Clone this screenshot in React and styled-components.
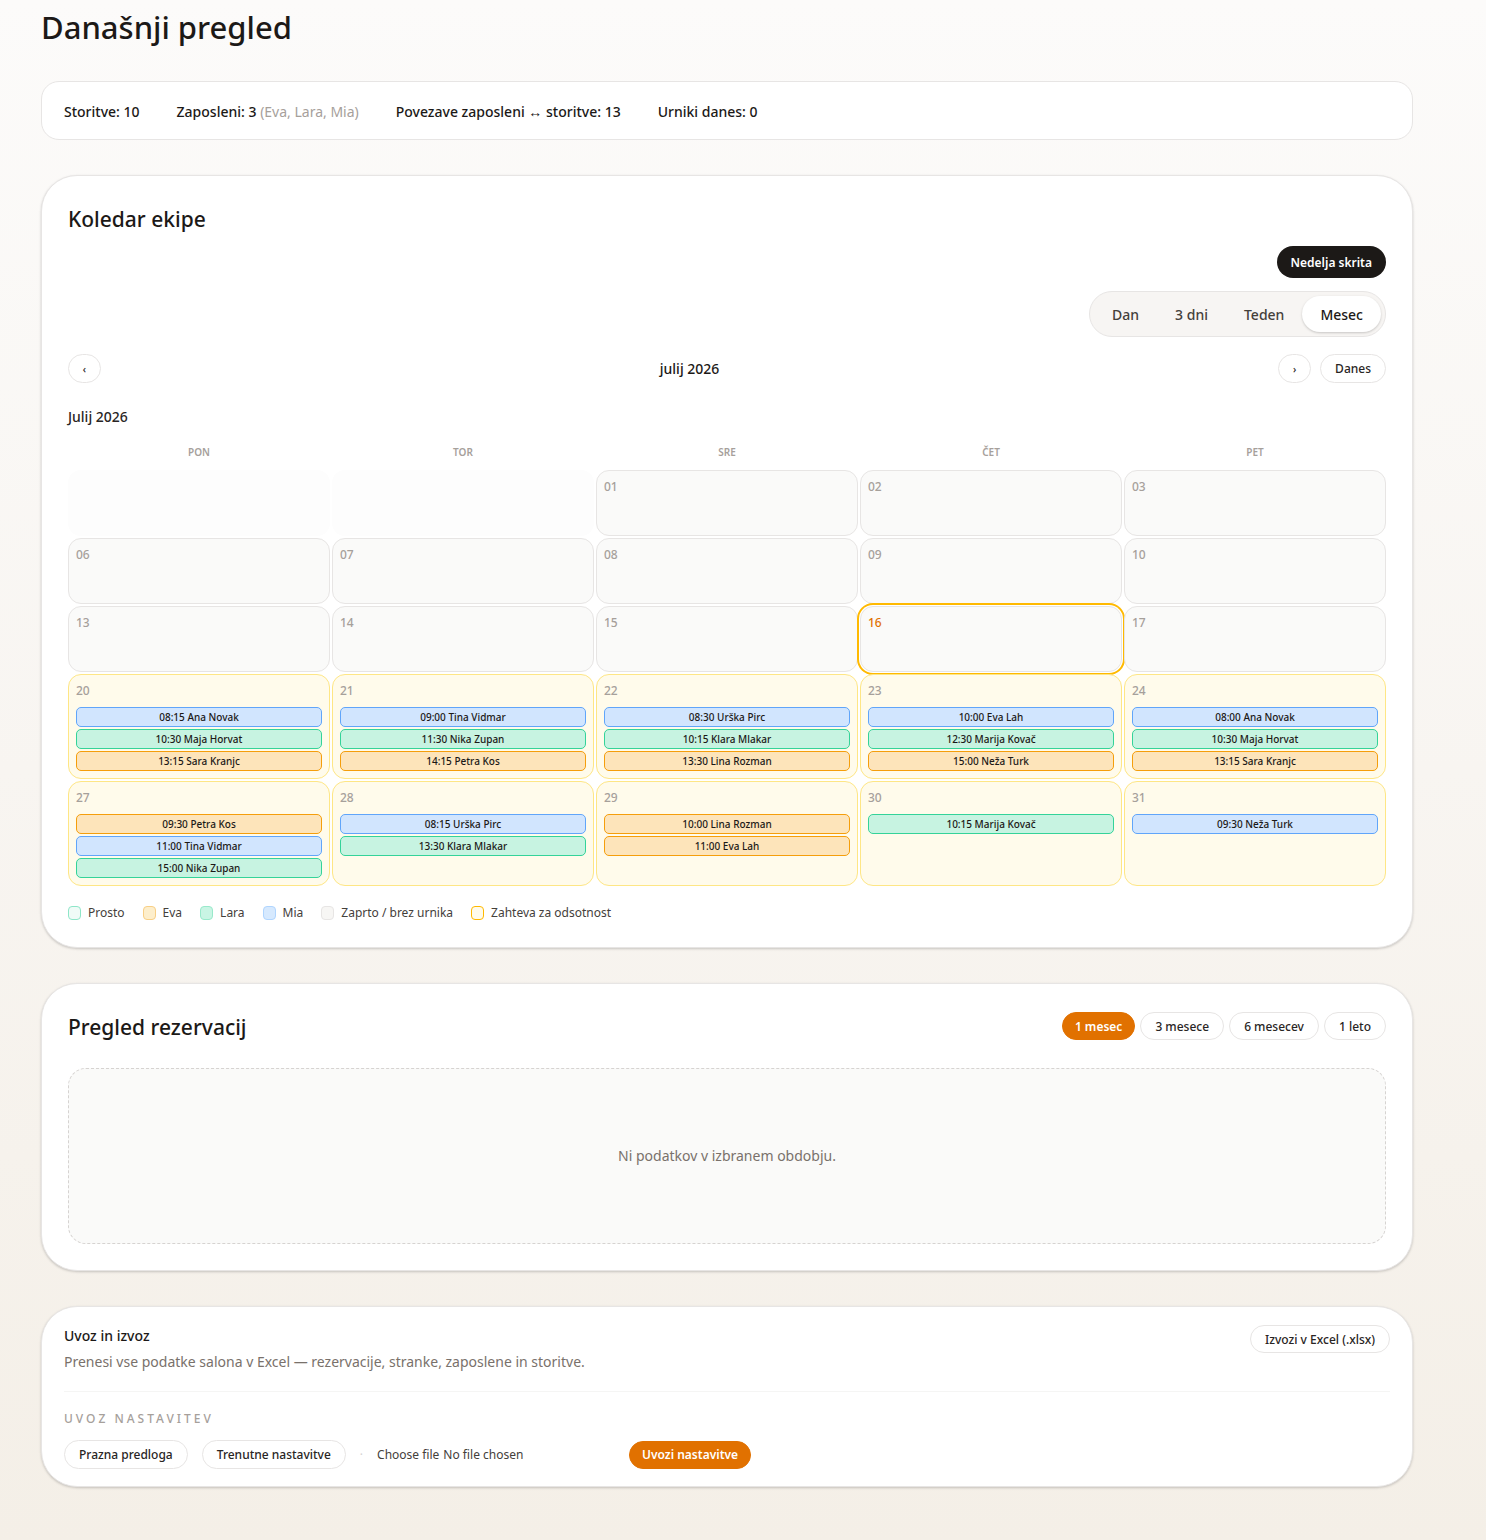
import React,{useState} from 'react';
import styled,{createGlobalStyle,css} from 'styled-components';

const GlobalStyle=createGlobalStyle`
    *{
        box-sizing:border-box;
    }
    html{
        min-height:100%;
        background:linear-gradient(to bottom,#fcfbfa 0%,#f8f5f1 50%,#f4efe7 100%);
    }
    body{
        margin:0;
        font-family:"Noto Sans","Open Sans",sans-serif;
        font-size:14px;
        line-height:20px;
        color:#1c1917;
    }
    h1,h2,h3,p,ul{
        margin:0;
        padding:0;
    }
    button{
        font-family:inherit;
        cursor:pointer;
    }
`;

const Page=styled.main`
    display:flex;
    flex-direction:column;
    gap:35px;
    padding:9px 73px 53px 41px;
`;

const Title=styled.h1`
    font-size:31px;
    line-height:37px;
    font-weight:500;
`;

const StatsBar=styled.section`
    display:flex;
    flex-wrap:wrap;
    gap:37px;
    padding:20px 22px 17px;
    background:#fff;
    border:1px solid #e7e5e4;
    border-radius:18px;
    font-weight:500;
`;

const Muted=styled.span`
    color:#a6a09b;
    font-weight:400;
`;

const Card=styled.section`
    display:flex;
    flex-direction:column;
    padding:${props=>props.$compact?"18px 22px 17px":"26px"};
    background:#fff;
    border:1px solid #e7e5e4;
    border-radius:36px;
    box-shadow:0 1px 3px rgba(0,0,0,0.12),0 1px 2px rgba(0,0,0,0.08);
`;

const CardTitle=styled.h2`
    font-size:21px;
    line-height:34px;
    font-weight:500;
`;

const ToolbarRow=styled.div`
    display:flex;
    justify-content:flex-end;
    margin-top:${props=>props.$space}px;
`;

const DarkButton=styled.button`
    height:32px;
    padding:0 14px;
    border:0;
    border-radius:16px;
    background:#1c1917;
    color:#fff;
    font-size:12px;
    font-weight:600;
`;

const Segmented=styled.div`
    display:flex;
    height:46px;
    padding:4px;
    border:1px solid #e7e5e4;
    border-radius:23px;
    background:#f7f5f3;
`;

const Segment=styled.button`
    height:36px;
    padding:0 18px;
    border:0;
    border-radius:18px;
    background:transparent;
    color:#44403b;
    font-size:14px;
    font-weight:500;
    ${props=>props.$active && css`
        background:#fff;
        color:#1c1917;
        box-shadow:0 1px 3px rgba(0,0,0,0.12),0 1px 2px rgba(0,0,0,0.08);
    `}
`;

const PillButton=styled.button`
    height:${props=>props.$tall?29:28}px;
    padding:0 14px;
    border:1px solid #e7e5e4;
    border-radius:15px;
    background:#fff;
    color:#292524;
    font-size:12px;
    font-weight:500;
    white-space:nowrap;
    ${props=>props.$active && css`
        border-color:#e17100;
        background:#e17100;
        color:#fff;
        font-weight:600;
        padding:0 12px;
    `}
`;

const ArrowButton=styled(PillButton)`
    width:33px;
    padding:0;
    font-size:10px;
`;

const MonthNav=styled.div`
    display:flex;
    align-items:center;
    justify-content:space-between;
    margin-top:17px;
`;

const NavGroup=styled.div`
    display:flex;
    gap:9px;
`;

const MonthLabel=styled.span`
    font-weight:500;
`;

const MonthHeading=styled.h3`
    margin-top:24px;
    font-size:14px;
    line-height:20px;
    font-weight:500;
    color:#292524;
`;

const WeekGrid=styled.div`
    display:grid;
    grid-template-columns:repeat(5,1fr);
    gap:2px;
`;

const WeekHeader=styled(WeekGrid)`
    margin:17px 0 10px;
`;

const DayName=styled.div`
    text-align:center;
    font-size:10px;
    line-height:16px;
    font-weight:600;
    color:#a6a09b;
`;

const DayCell=styled.div`
    display:flex;
    flex-direction:column;
    min-height:${props=>props.$open?105:66}px;
    padding:7px 7px 6px;
    border:1px solid ${props=>props.$open?"#fee685":"#e7e5e4"};
    border-radius:13px;
    background:${props=>props.$open?"#fffbeb":"#fafaf9"};
    ${props=>props.$today && css`
        box-shadow:0 0 0 1px #fff,0 0 0 3px #ffb900;
    `}
`;

const EmptyCell=styled.div`
    border-radius:13px;
    background:#fdfdfd;
`;

const DayNumber=styled.span`
    font-size:12px;
    line-height:18px;
    font-weight:500;
    color:${props=>props.$today?"#e17100":"#a6a09b"};
`;

const EventList=styled.ul`
    display:flex;
    flex-direction:column;
    gap:2px;
    margin-top:7px;
    list-style:none;
`;

const staff={
    eva:{
        background:"#fde4ba",
        border:"#f59e0b"
    },
    lara:{
        background:"#c7f3e1",
        border:"#34d399"
    },
    mia:{
        background:"#d1e5fe",
        border:"#60a5fa"
    }
};

const EventPill=styled.li`
    height:20px;
    border:1px solid ${props=>staff[props.$who].border};
    border-radius:5px;
    background:${props=>staff[props.$who].background};
    font-size:10px;
    line-height:19px;
    font-weight:500;
    text-align:center;
    white-space:nowrap;
    overflow:hidden;
`;

const Legend=styled.ul`
    display:flex;
    flex-wrap:wrap;
    gap:18px;
    margin-top:18px;
    list-style:none;
    font-size:12px;
    line-height:17px;
    color:#44403b;
`;

const LegendItem=styled.li`
    display:flex;
    align-items:center;
    gap:7px;
`;

const Swatch=styled.span`
    width:13px;
    height:14px;
    border:1px solid ${props=>props.$border};
    border-radius:4px;
    background:${props=>props.$fill};
`;

const CardHead=styled.div`
    display:flex;
    align-items:flex-start;
    justify-content:space-between;
`;

const PeriodGroup=styled.div`
    display:flex;
    gap:5px;
    padding-top:2px;
`;

const EmptyState=styled.div`
    display:flex;
    align-items:center;
    justify-content:center;
    height:176px;
    margin-top:24px;
    border:1px dashed #d6d3d1;
    border-radius:18px;
    background:#fafaf9;
    color:#79716b;
`;

const SmallTitle=styled.h2`
    font-size:14px;
    line-height:22px;
    font-weight:500;
`;

const Description=styled.p`
    margin-top:4px;
    line-height:22px;
    color:#79716b;
`;

const ImportArea=styled.div`
    margin-top:18px;
    padding-top:18px;
    border-top:1px solid #f5f5f4;
`;

const Overline=styled.h3`
    font-size:12px;
    line-height:18px;
    font-weight:500;
    letter-spacing:3px;
    text-transform:uppercase;
    color:#a6a09b;
`;

const ImportRow=styled.div`
    display:flex;
    flex-wrap:wrap;
    align-items:center;
    gap:14px;
    margin-top:12px;
    font-size:12px;
    color:#44403b;
`;

const Dot=styled.span`
    color:#d6d3d1;
`;

const FileLabel=styled.label`
    display:flex;
    gap:4px;
    width:238px;
    cursor:pointer;
`;

const HiddenFile=styled.input`
    position:absolute;
    width:1px;
    height:1px;
    opacity:0;
`;

const weekDays=["pon","tor","sre","čet","pet"];

const closedDays=["01","02","03","06","07","08","09","10","13","14","15","16","17"];

const openDays=[
    {day:"20",events:[["mia","08:15 Ana Novak"],["lara","10:30 Maja Horvat"],["eva","13:15 Sara Kranjc"]]},
    {day:"21",events:[["mia","09:00 Tina Vidmar"],["lara","11:30 Nika Zupan"],["eva","14:15 Petra Kos"]]},
    {day:"22",events:[["mia","08:30 Urška Pirc"],["lara","10:15 Klara Mlakar"],["eva","13:30 Lina Rozman"]]},
    {day:"23",events:[["mia","10:00 Eva Lah"],["lara","12:30 Marija Kovač"],["eva","15:00 Neža Turk"]]},
    {day:"24",events:[["mia","08:00 Ana Novak"],["lara","10:30 Maja Horvat"],["eva","13:15 Sara Kranjc"]]},
    {day:"27",events:[["eva","09:30 Petra Kos"],["mia","11:00 Tina Vidmar"],["lara","15:00 Nika Zupan"]]},
    {day:"28",events:[["mia","08:15 Urška Pirc"],["lara","13:30 Klara Mlakar"]]},
    {day:"29",events:[["eva","10:00 Lina Rozman"],["eva","11:00 Eva Lah"]]},
    {day:"30",events:[["lara","10:15 Marija Kovač"]]},
    {day:"31",events:[["mia","09:30 Neža Turk"]]}
];

const legend=[
    {label:"Prosto",fill:"#f0fbf7",border:"#8ee6c8"},
    {label:"Eva",fill:"#fdeecb",border:"#f8cf86"},
    {label:"Lara",fill:"#c9f5e4",border:"#99e9cb"},
    {label:"Mia",fill:"#d6e9fe",border:"#b0d5fe"},
    {label:"Zaprto / brez urnika",fill:"#f7f6f4",border:"#e7e5e4"},
    {label:"Zahteva za odsotnost",fill:"#fffbeb",border:"#ffb900"}
];

const views=["Dan","3 dni","Teden","Mesec"];
const periods=["1 mesec","3 mesece","6 mesecev","1 leto"];
const today="16";

function TeamCalendar(){

    const [view,set_view]=useState("Mesec");

    return(
        <Card>
            <CardTitle>Koledar ekipe</CardTitle>
            <ToolbarRow $space={10}>
                <DarkButton type="button">Nedelja skrita</DarkButton>
            </ToolbarRow>
            <ToolbarRow $space={13}>
                <Segmented>
                    {views.map(item=>(
                        <Segment key={item} type="button" $active={item===view} onClick={()=>set_view(item)}>{item}</Segment>
                    ))}
                </Segmented>
            </ToolbarRow>

            <MonthNav>
                <ArrowButton $tall type="button" aria-label="Prejšnji mesec">‹</ArrowButton>
                <MonthLabel>julij 2026</MonthLabel>
                <NavGroup>
                    <ArrowButton $tall type="button" aria-label="Naslednji mesec">›</ArrowButton>
                    <PillButton $tall type="button">Danes</PillButton>
                </NavGroup>
            </MonthNav>

            <MonthHeading>Julij 2026</MonthHeading>
            <WeekHeader>
                {weekDays.map(name=><DayName key={name}>{name.toUpperCase()}</DayName>)}
            </WeekHeader>
            <WeekGrid>
                <EmptyCell/>
                <EmptyCell/>
                {closedDays.map(day=>(
                    <DayCell key={day} $today={day===today}>
                        <DayNumber $today={day===today}>{day}</DayNumber>
                    </DayCell>
                ))}
                {openDays.map(({day,events})=>(
                    <DayCell key={day} $open>
                        <DayNumber>{day}</DayNumber>
                        <EventList>
                            {events.map(([who,text])=><EventPill key={text} $who={who}>{text}</EventPill>)}
                        </EventList>
                    </DayCell>
                ))}
            </WeekGrid>

            <Legend>
                {legend.map(item=>(
                    <LegendItem key={item.label}>
                        <Swatch $fill={item.fill} $border={item.border}/>
                        {item.label}
                    </LegendItem>
                ))}
            </Legend>
        </Card>
    );
}

function Reservations(){

    const [period,set_period]=useState("1 mesec");

    return(
        <Card>
            <CardHead>
                <CardTitle>Pregled rezervacij</CardTitle>
                <PeriodGroup>
                    {periods.map(item=>(
                        <PillButton key={item} type="button" $active={item===period} onClick={()=>set_period(item)}>{item}</PillButton>
                    ))}
                </PeriodGroup>
            </CardHead>
            <EmptyState>Ni podatkov v izbranem obdobju.</EmptyState>
        </Card>
    );
}

function ImportExport(){

    const [file_name,set_file_name]=useState("No file chosen");

    return(
        <Card $compact>
            <CardHead>
                <div>
                    <SmallTitle>Uvoz in izvoz</SmallTitle>
                    <Description>Prenesi vse podatke salona v Excel — rezervacije, stranke, zaposlene in storitve.</Description>
                </div>
                <PillButton type="button">Izvozi v Excel (.xlsx)</PillButton>
            </CardHead>
            <ImportArea>
                <Overline>Uvoz nastavitev</Overline>
                <ImportRow>
                    <PillButton $tall type="button">Prazna predloga</PillButton>
                    <PillButton $tall type="button">Trenutne nastavitve</PillButton>
                    <Dot>·</Dot>
                    <FileLabel>
                        <HiddenFile type="file" accept=".xlsx" onChange={e=>set_file_name(e.target.files[0]?.name ?? "No file chosen")}/>
                        <span>Choose file</span>
                        <span>{file_name}</span>
                    </FileLabel>
                    <PillButton $active type="button">Uvozi nastavitve</PillButton>
                </ImportRow>
            </ImportArea>
        </Card>
    );
}

function App(){
    return(
        <>
            <GlobalStyle/>
            <Page>
                <Title>Današnji pregled</Title>
                <StatsBar>
                    <span>Storitve: 10</span>
                    <span>Zaposleni: 3 <Muted>(Eva, Lara, Mia)</Muted></span>
                    <span>Povezave zaposleni ↔ storitve: 13</span>
                    <span>Urniki danes: 0</span>
                </StatsBar>
                <TeamCalendar/>
                <Reservations/>
                <ImportExport/>
            </Page>
        </>
    );
}
export default App
